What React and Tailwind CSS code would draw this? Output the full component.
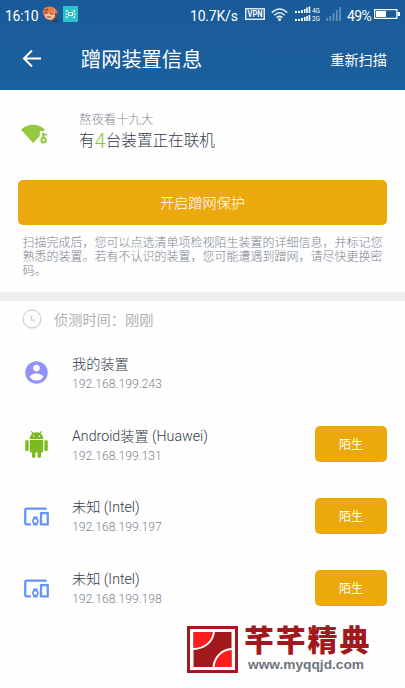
// ----------------------------------------------------------------------
const DEVICES = [
  { id: 1, name: "我的装置", ip: "192.168.199.243", icon: AccountIcon },
  { id: 2, name: "Android装置 (Huawei)", ip: "192.168.199.131", icon: AndroidIcon, unknown: true },
  { id: 3, name: "未知 (Intel)", ip: "192.168.199.197", icon: DevicesIcon, unknown: true },
  { id: 4, name: "未知 (Intel)", ip: "192.168.199.198", icon: DevicesIcon, unknown: true },
];

const NOTICE = [
  "扫描完成后，您可以点选清单项检视陌生装置的详细信息，并标记您",
  "熟悉的装置。若有不认识的装置，您可能遭遇到蹭网，请尽快更换密",
  "码。",
];

function AccountIcon() {
  return (
    <svg viewBox="0 0 24 24" className="size-[27px] fill-[#9292fc]">
      <path d="M12 2C6.48 2 2 6.48 2 12s4.48 10 10 10 10-4.48 10-10S17.52 2 12 2zm0 3c1.66 0 3 1.34 3 3s-1.34 3-3 3-3-1.34-3-3 1.34-3 3-3zm0 14.2c-2.5 0-4.71-1.28-6-3.22.03-1.99 4-3.08 6-3.08 1.99 0 5.97 1.09 6 3.08-1.29 1.94-3.5 3.22-6 3.22z" />
    </svg>
  );
}

function AndroidIcon() {
  return (
    <svg viewBox="0 0 24 24" className="size-[27px] fill-[#7cba20]">
      <path d="M6 18c0 .55.45 1 1 1h1v3.5c0 .83.67 1.5 1.5 1.5s1.5-.67 1.5-1.5V19h2v3.5c0 .83.67 1.5 1.5 1.5s1.5-.67 1.5-1.5V19h1c.55 0 1-.45 1-1V8H6v10zM3.5 8C2.67 8 2 8.67 2 9.5v7c0 .83.67 1.5 1.5 1.5S5 17.33 5 16.5v-7C5 8.67 4.33 8 3.5 8zm17 0c-.83 0-1.5.67-1.5 1.5v7c0 .83.67 1.5 1.5 1.5s1.5-.67 1.5-1.5v-7c0-.83-.67-1.5-1.5-1.5zm-4.97-5.84l1.3-1.3c.2-.2.2-.51 0-.71-.2-.2-.51-.2-.71 0l-1.48 1.48C13.85 1.23 12.95 1 12 1c-.96 0-1.86.23-2.66.63L7.85.15c-.2-.2-.51-.2-.71 0-.2.2-.2.51 0 .71l1.31 1.31C6.97 3.26 6 5.01 6 7h12c0-1.99-.97-3.75-2.47-4.84zM10 5H9V4h1v1zm5 0h-1V4h1v1z" />
    </svg>
  );
}

function DevicesIcon() {
  return (
    <svg viewBox="0 0 24 24" className="size-[27px] fill-[#6494fa]">
      <path d="M3 6h18V4H3c-1.1 0-2 .9-2 2v12c0 1.1.9 2 2 2h4v-2H3V6zm10 6H9v1.78c-.61.55-1 1.33-1 2.22s.39 1.67 1 2.22V20h4v-1.78c.61-.55 1-1.34 1-2.22s-.39-1.67-1-2.22V12zm-2 5.5c-.83 0-1.5-.67-1.5-1.5s.67-1.5 1.5-1.5 1.5.67 1.5 1.5-.67 1.5-1.5 1.5zM22 8h-6c-.5 0-1 .5-1 1v10c0 .5.5 1 1 1h6c.5 0 1-.5 1-1V9c0-.5-.5-1-1-1zm-1 10h-4v-8h4v8z" />
    </svg>
  );
}

function WifiKeyIcon() {
  return (
    <svg viewBox="0 0 27 20" className="mt-[-2px] h-5 w-[27px] shrink-0">
      <path d="M0 5.500C7-.8 17-.8 24 5.500L22.500 7h-3.700v5L12 19z" fill="#94c83e" />
      <path d="M21.200 14V8.500h2V9.800H26v1.800h-2.600v2.300z" fill="#94c83e" />
      <circle cx="22.600" cy="16.300" r="2.200" fill="none" stroke="#94c83e" strokeWidth="2" />
    </svg>
  );
}

// ----------------------------------------------------------------------
function StatusBar() {
  return (
    <div className="flex h-7 items-center pl-[5px] pr-[5px] text-[14px] leading-none">
      <span className="mt-[3px] w-[37px] tracking-[-0.3px]">16:10</span>
      <svg viewBox="0 0 17 17" className="size-[17px]">
        <path d="M1 8C0 3 4 0 8 .5s7 2.500 7.200 6L15 10l-2 3-3 1.500L4 13z" fill="#ef7c4d" />
        <path d="M3 8l3-1 2 1 4-2 1 4-3 3-4 .5-3-3z" fill="#f3c4a0" />
        <path d="M2 7l4 0M8 8h4M5 11h4M3 5l3-2" stroke="#713b38" strokeWidth="1.200" />
        <path d="M14 7v5l-3 2.500 3 1 2-2" fill="none" stroke="#34364e" strokeWidth="1.300" />
      </svg>
      <svg viewBox="0 0 15 16" className="ml-[4px] h-4 w-[15px]">
        <rect width="15" height="16" rx="1" fill="#28c3cb" />
        <g fill="none" stroke="#fff">
          <path d="M3.500 6V4.500H5M10 4.500h1.500V6M3.500 10v1.500H5M10 11.500h1.500V10M2.500 8h2M10.500 8h2" />
          <rect x="5.500" y="6.500" width="4" height="3" />
        </g>
      </svg>
      <span className="ml-auto mt-[3px] w-[55px] tracking-[-0.2px]">10.7K/s</span>
      <svg viewBox="0 0 20 12" className="h-3 w-5">
        <rect x=".75" y=".75" width="18.500" height="10.500" fill="none" stroke="#dbe7f2" strokeWidth="1.500" />
        <text x="2.500" y="9" fontSize="8.500" fontWeight="700" textLength="15" lengthAdjust="spacingAndGlyphs" fill="#fff" fontFamily="Roboto">VPN</text>
      </svg>
      <svg viewBox="0 0 17 13" className="ml-[6px] h-[13px] w-[17px]" fill="none" stroke="#e7eff6" strokeWidth="1.500">
        <path d="M.8 4.600Q8.500-2.600 16.200 4.600M3.200 7.200q5.300-4.800 10.600 0M5.600 9.600q2.900-2.500 5.800 0" />
        <circle cx="8.500" cy="11.500" r=".8" fill="#fff" />
      </svg>
      <svg viewBox="0 0 25 16" className="ml-[7px] h-4 w-[25px]">
        <path d="M0 5h2v2H0zM3 5h2v2H3zM6 4h2v3H6zM9 3h1.500v4H9zM11.200 1.500h1.600V7h-1.600zM13.600 .5h1.700V7h-1.700zM0 13h2v2H0zM3 13h2v2H3zM6 12h2v3H6zM9 11h1.500v4H9zM11.200 10h1.600v5h-1.600zM13.600 9h1.700v6h-1.700z" fill="#fff" />
        <text x="17" y="6.500" fontSize="7.500" fill="#fff" fontFamily="Roboto" textLength="8" lengthAdjust="spacingAndGlyphs">4G</text>
        <text x="17" y="15" fontSize="7.500" fill="#fff" fontFamily="Roboto" textLength="8" lengthAdjust="spacingAndGlyphs">2G</text>
      </svg>
      <svg viewBox="0 0 15 14" className="ml-[6px] h-3.5 w-[15px]" fill="#5f90bd">
        <path d="M0 11h1.800v3H0zM3.300 9h1.800v5H3.300zM6.600 6h1.800v8H6.600zM9.900 3h1.800v11H9.900zM13.200 0H15v14h-1.800z" />
      </svg>
      <span className="ml-[6px] mt-[3px] w-[27px] tracking-[-0.6px]">49%</span>
      <svg viewBox="0 0 26 10" className="h-2.5 w-[26px]">
        <rect x=".6" y=".6" width="22.300" height="8.800" fill="none" stroke="#fff" strokeWidth="1.200" />
        <path d="M2 2h10v6H2zM23.500 3H26v4h-2.500z" fill="#fff" />
      </svg>
    </div>
  );
}

function Header() {
  return (
    <header className="h-[90px] bg-gradient-to-b from-[#195b98] to-[#1b609d] text-white">
      <StatusBar />
      <div className="flex h-[62px] items-center pl-[22px] pr-[18px]">
        <svg viewBox="0 0 19 18" className="mt-[-2px] size-[19px]" fill="none" stroke="#fff" strokeWidth="2">
          <path d="M10 1L2 9l8 8M2 9h17" />
        </svg>
        <h1 className="ml-10 mt-[2px] text-[20.200px] leading-none">蹭网装置信息</h1>
        <span className="ml-auto mt-[2px] text-[14.200px] leading-none">重新扫描</span>
      </div>
    </header>
  );
}

function DeviceRow({ device }) {
  const Icon = device.icon;

  return (
    <li className="flex h-[71.800px] items-center pl-[22.500px] pr-[18px]">
      <Icon />
      <div className="ml-[22.500px] pt-[2px] font-light">
        <p className="text-[14.200px] leading-[20px] text-[#343b4b]">{device.name}</p>
        <p className="text-[12.200px] leading-[20px] text-[#7d8490]">{device.ip}</p>
      </div>
      {device.unknown && (
        <button className="ml-auto mt-[-1px] h-9 w-[72px] rounded-[5px] bg-[#eba90d] pt-[2px] text-[12px] text-white">
          陌生
        </button>
      )}
    </li>
  );
}

function Brand() {
  return (
    <div className="absolute left-[187px] top-[626px] flex">
      <svg viewBox="0 0 51 47" className="h-[47px] w-[51px]">
        <rect x="1.500" y="1.500" width="48" height="44" fill="#fff" stroke="#a2191d" strokeWidth="3" />
        <rect x="6.500" y="6" width="38" height="35" fill="#a2191d" />
        <path d="M6.500 6h20.500C26.500 15 19 22.500 6.500 22.500z" fill="#ff1c1c" />
        <path d="M44.500 41H27C27 32 34 23.500 44.500 23.500z" fill="#ff1c1c" />
        <path d="M27 5.500C26 15 19 22.500 6 23M26.500 41.500C27 32 34 23.500 45 23" fill="none" stroke="#fff" strokeWidth="2" />
      </svg>
      <div className="ml-[6px]">
        <p className="text-[30px] font-black leading-[30px] tracking-[1.800px] text-[#a2191d]">芊芊精典</p>
        <svg viewBox="0 0 122 20" className="ml-[4px] h-5 w-[122px]">
          <text x="0" y="13" fontSize="12.500" fontWeight="700" textLength="116" lengthAdjust="spacingAndGlyphs" fill="#6f737c" fontFamily="Liberation Sans">www.myqqjd.com</text>
        </svg>
      </div>
    </div>
  );
}

// ----------------------------------------------------------------------
export default function App() {
  return (
    <div className="relative h-[688px] w-[405px] overflow-hidden bg-[#fefefe] font-[Roboto,'Noto_Sans_CJK_SC',sans-serif]">
      <Header />

      <section className="flex h-[90px] items-center pl-[20.500px]">
        <WifiKeyIcon />
        <div className="ml-[31.500px] mt-[-3px] font-light">
          <p className="text-[12.400px] leading-[17px] text-[#868b94]">熬夜看十九大</p>
          <p className="flex h-[29px] items-center text-[15.600px] text-[#343b4b]">
            有<span className="mt-[-2px] text-[20px] text-[#86cc2d]">4</span>台装置正在联机
          </p>
        </div>
      </section>

      <section className="h-28 px-[18px]">
        <button className="block h-[45px] w-full rounded-[5px] bg-[#eba90d] pt-[2px] text-[14.200px] font-light text-white">
          开启蹭网保护
        </button>
        <div className="mt-[11px] pl-[4.500px] text-[12px] font-light leading-[14px] text-[#7d8490]">
          {NOTICE.map((line) => (
            <p key={line} className="whitespace-nowrap">{line}</p>
          ))}
        </div>
      </section>

      <div className="h-[9px] bg-[#edefee]"></div>

      <div className="flex h-[36px] items-center pl-[22px] text-[14.200px] text-[#aeb1b5]">
        <svg viewBox="0 0 20 20" className="size-5" fill="none" stroke="#d3d5d6" strokeWidth="1.300">
          <circle cx="10" cy="10" r="9" />
          <path d="M9.500 6.500v4.700h4" />
        </svg>
        <span className="ml-3 mt-[2px] leading-none">侦测时间：刚刚</span>
      </div>

      <ul>
        {DEVICES.map((device) => (
          <DeviceRow key={device.id} device={device} />
        ))}
      </ul>

      <Brand />
    </div>
  );
}
